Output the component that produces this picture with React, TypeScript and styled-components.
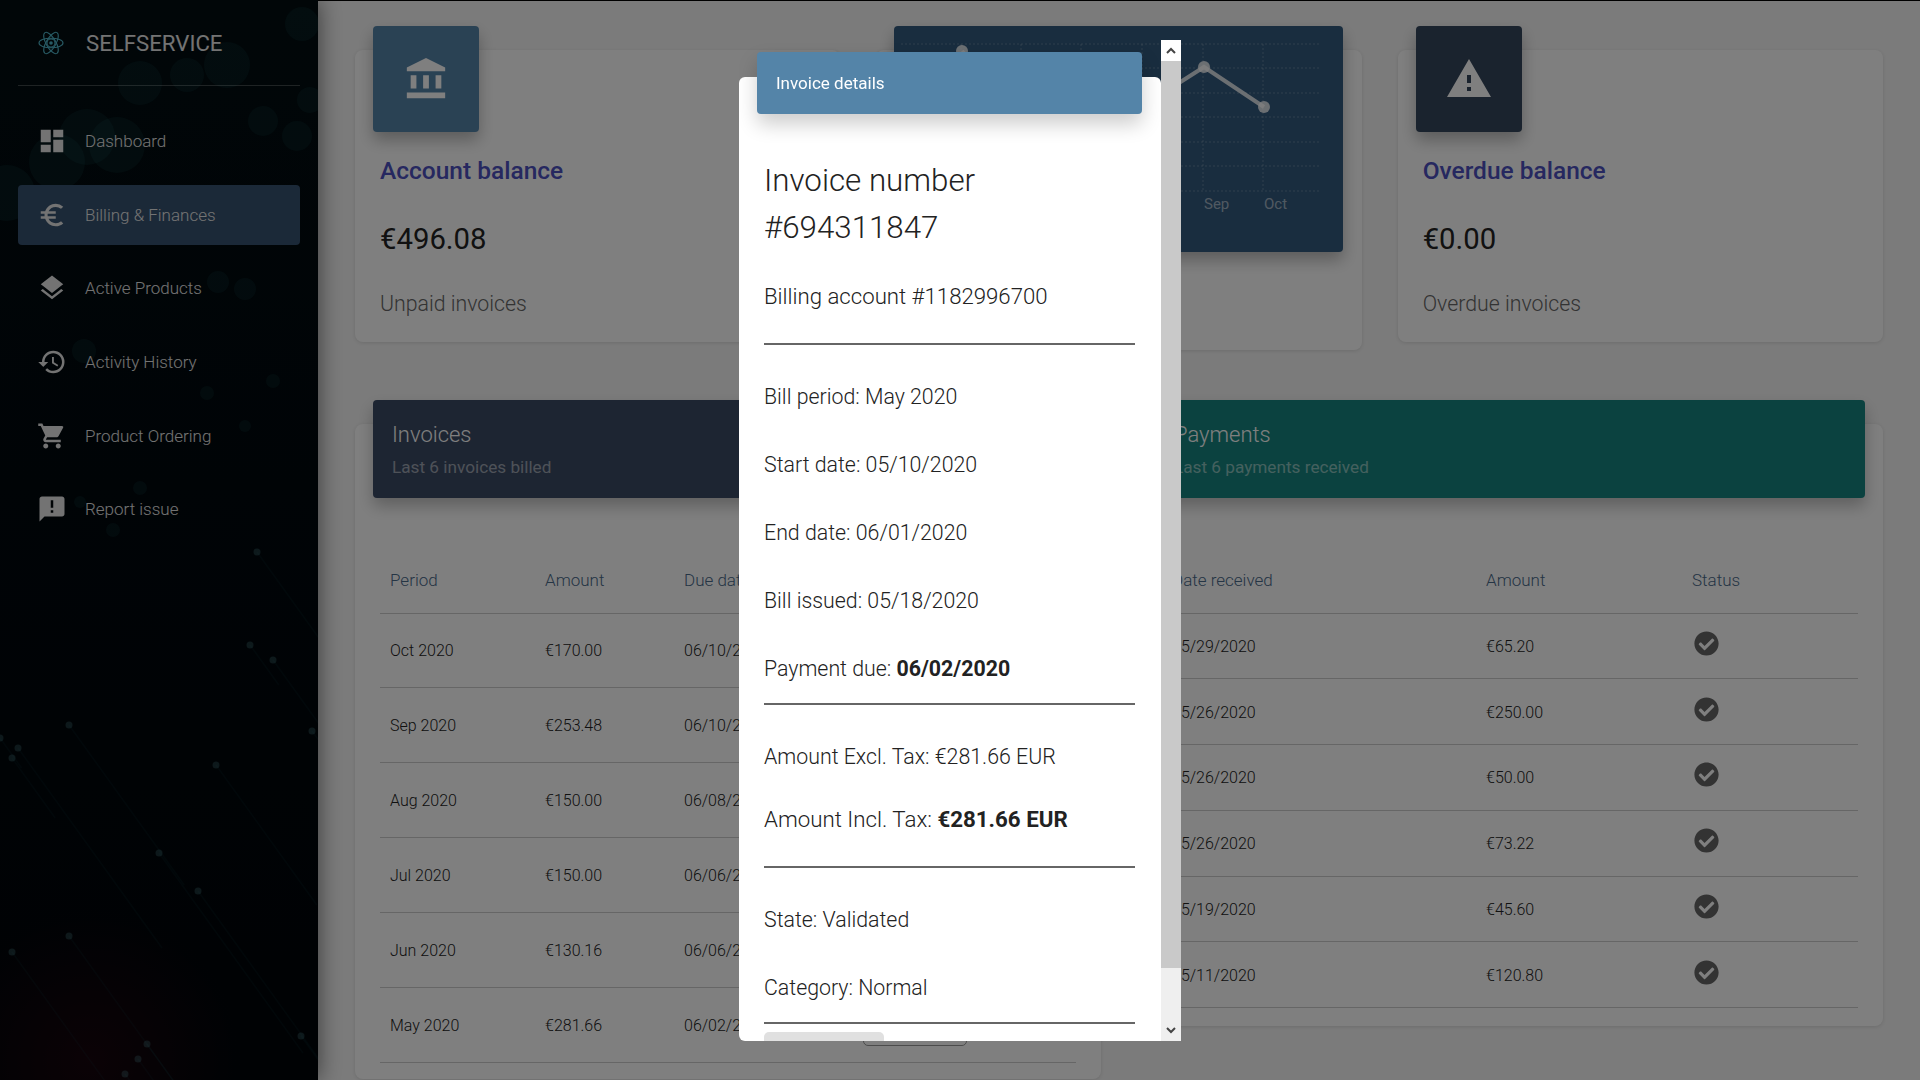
import React from 'react';
import styled, { createGlobalStyle } from 'styled-components';
import {
    MdAccountBalance,
    MdAnnouncement,
    MdDashboard,
    MdEuroSymbol,
    MdHistory,
    MdLayers,
    MdShoppingCart,
    MdWarning
} from 'react-icons/md';
import { FaCheckCircle } from 'react-icons/fa';

const GlobalStyle = createGlobalStyle`
    html, body {
        margin: 0;
        height: 100%;
        overflow: hidden;
        background: #f7f7f7;
        font-family: Roboto, "Liberation Sans", sans-serif;
        font-weight: 300;
        color: #333;
    }
    * {
        box-sizing: border-box;
    }
`;

const Page = styled.div`
    display: flex;
    width: 1920px;
    height: 1080px;
    overflow: hidden;
`;

/* Sidebar */

const Sidebar = styled.aside`
    position: relative;
    flex: 0 0 318px;
    height: 1080px;
    padding: 0 18px;
    overflow: hidden;
    background:
        radial-gradient(circle at 90px 1060px, #16040c 0, rgba(22, 4, 12, 0) 150px),
        linear-gradient(180deg, #020d11 0, #01080d 45%, #000408 100%);
    box-shadow: 0 0 22px rgba(0, 0, 0, 0.55);
    z-index: 1;
`;

const SidebarArt = styled.svg`
    position: absolute;
    top: 0;
    left: 0;
`;

const Brand = styled.div`
    position: relative;
    display: flex;
    align-items: center;
    height: 86px;
    margin-bottom: 25px;
    padding-left: 20px;
    border-bottom: 1px solid rgba(255, 255, 255, 0.24);
    font-size: 22.2px;
    font-weight: 400;
    color: #e6e6e6;
`;

const BrandName = styled.span`
    margin-left: 22px;
`;

const Nav = styled.nav`
    position: relative;
    display: flex;
    flex-direction: column;
    gap: 13.2px;
`;

const NavItem = styled.a<{ $active?: boolean }>`
    display: flex;
    align-items: center;
    height: 60.4px;
    padding-left: 20px;
    border-radius: 4px;
    background: ${p => (p.$active ? '#365270' : 'transparent')};
    color: #e6e6e6;
    font-size: 17px;
    svg {
        flex: 0 0 30px;
        margin-right: 18px;
        margin-left: -1px;
    }
`;

/* Main column */

const Main = styled.main`
    flex: 1;
    height: 1080px;
    padding: 26px 37px 0;
    border-top: 1px solid #000;
    background: #f7f7f7;
`;

const StatGrid = styled.section`
    display: grid;
    grid-template-columns: repeat(3, 1fr);
    gap: 36px;
    align-items: start;
    margin-top: -1px;
`;

const Card = styled.div`
    margin-top: 24px;
    padding: 0 18px;
    border-radius: 8px;
    background: #fff;
    box-shadow: 0 1px 4px rgba(0, 0, 0, 0.12);
`;

const StatCard = styled(Card)<{ $tail?: number }>`
    padding-bottom: ${p => p.$tail ?? 25}px;
`;

const Tile = styled.div<{ $color: string }>`
    display: flex;
    align-items: center;
    justify-content: center;
    width: 106px;
    height: 106px;
    margin-top: -24px;
    border-radius: 4px;
    background: ${p => p.$color};
    color: #fff;
    box-shadow: 0 8px 16px rgba(0, 0, 0, 0.28);
`;

const StatTitle = styled.h3`
    margin: 25px 0 0 7px;
    font-size: 24.5px;
    line-height: 28px;
    font-weight: 500;
    color: #4c50c0;
`;

const StatValue = styled.div`
    margin: 37px 0 0 7px;
    font-size: 29.3px;
    line-height: 34px;
    font-weight: 400;
    color: #222;
`;

const StatNote = styled.div`
    margin: 35px 0 0 7px;
    font-size: 21.3px;
    line-height: 26px;
    color: #666;
`;

const ChartPanel = styled.div`
    position: relative;
    height: 226px;
    margin: -24px 1px 0 0;
    border-radius: 4px;
    background: #335a7e;
    box-shadow: 0 8px 16px rgba(0, 0, 0, 0.28);
`;

const TableGrid = styled.section`
    display: grid;
    grid-template-columns: repeat(2, 1fr);
    gap: 36px;
    align-items: start;
    margin-top: 50px;
`;

const TableCard = styled(Card)<{ $tail: number }>`
    padding-bottom: ${p => p.$tail}px;
`;

const TableHeader = styled.div<{ $color: string }>`
    height: 98px;
    margin-top: -24px;
    padding: 21px 19px 0;
    border-radius: 4px;
    background: ${p => p.$color};
    box-shadow: 0 8px 16px rgba(0, 0, 0, 0.25);
`;

const TableTitle = styled.div`
    font-size: 22px;
    line-height: 28px;
    color: #fff;
`;

const TableSub = styled.div`
    margin-top: 8px;
    font-size: 17.2px;
    line-height: 20px;
    font-weight: 400;
    color: rgba(255, 255, 255, 0.5);
`;

const DataTable = styled.table<{ $rowHeight: number }>`
    width: calc(100% - 14px);
    margin: 49px 7px 0;
    border-collapse: collapse;
    table-layout: fixed;
    td {
        height: ${p => p.$rowHeight}px;
    }
`;

const HeadCell = styled.th<{ $width?: number }>`
    width: ${p => (p.$width ? `${p.$width}px` : 'auto')};
    height: 66px;
    padding: 0 0 0 10px;
    border-bottom: 1px solid #ccc;
    text-align: left;
    font-size: 17px;
    font-weight: 300;
    color: #4a6a8a;
`;

const Cell = styled.td`
    padding: 1px 0 0 10px;
    border-bottom: 1px solid #ccc;
    font-size: 16px;
    color: #222;
`;

const ViewButton = styled.button`
    width: 104px;
    height: 42px;
    border: 1px solid #999;
    border-radius: 5px;
    background: transparent;
    font: inherit;
`;

const StatusIcon = styled(FaCheckCircle)`
    display: block;
    margin: -6px 0 0 2px;
    color: #666;
`;

/* Modal */

const Backdrop = styled.div`
    position: fixed;
    inset: 0;
    z-index: 5;
    background: rgba(0, 0, 0, 0.5);
`;

const ModalFrame = styled.div`
    position: absolute;
    top: 40px;
    left: 739px;
    width: 442px;
    height: 1001px;
    overflow: hidden;
    border-bottom-left-radius: 6px;
`;

const Paper = styled.div`
    width: 422px;
    min-height: 1100px;
    margin-top: 37px;
    padding: 0 26px 0 25px;
    border-radius: 6px;
    background: #fff;
`;

const ModalHeader = styled.div`
    width: 385px;
    height: 62px;
    margin: 0 0 0 -7px;
    position: relative;
    top: -25px;
    padding-left: 19px;
    display: flex;
    align-items: center;
    border-radius: 4px;
    background: #5484a8;
    color: #fff;
    font-size: 17px;
    font-weight: 400;
    box-shadow: 0 10px 20px rgba(0, 0, 0, 0.2);
`;

const InvoiceHeading = styled.h2`
    margin: 18px 0 0;
    font-size: 31.3px;
    line-height: 47px;
    font-weight: 300;
    color: #222;
`;

const Line = styled.p<{ $top: number; $size?: number }>`
    margin: ${p => p.$top}px 0 0;
    font-size: ${p => p.$size ?? 21.33}px;
    line-height: 32px;
    color: #222;
    white-space: nowrap;
    b {
        font-weight: 700;
    }
`;

const Rule = styled.hr<{ $top: number }>`
    height: 2px;
    margin: ${p => p.$top}px 0 0;
    border: 0;
    background: #666;
`;

const CloseButton = styled.button`
    display: block;
    width: 120px;
    height: 40px;
    margin-top: 8px;
    border: 0;
    border-radius: 5px;
    background: #e0e0e0;
`;

const ScrollTrack = styled.div`
    position: absolute;
    top: 0;
    right: 0;
    display: flex;
    flex-direction: column;
    width: 20px;
    height: 1001px;
    background: #efefef;
`;

const ScrollArrow = styled.div`
    display: flex;
    align-items: center;
    justify-content: center;
    height: 21px;
    background: #fff;
`;

const ScrollArrowLow = styled(ScrollArrow)`
    margin-top: auto;
    background: transparent;
`;

const ScrollThumb = styled.div`
    height: 907px;
    background: #c9c9c9;
`;

const navItems = [
    { label: 'Dashboard', Icon: MdDashboard },
    { label: 'Billing & Finances', Icon: MdEuroSymbol, active: true },
    { label: 'Active Products', Icon: MdLayers },
    { label: 'Activity History', Icon: MdHistory },
    { label: 'Product Ordering', Icon: MdShoppingCart },
    { label: 'Report issue', Icon: MdAnnouncement }
];

const invoices = [
    ['Oct 2020', '€170.00', '06/10/2020'],
    ['Sep 2020', '€253.48', '06/10/2020'],
    ['Aug 2020', '€150.00', '06/08/2020'],
    ['Jul 2020', '€150.00', '06/06/2020'],
    ['Jun 2020', '€130.16', '06/06/2020'],
    ['May 2020', '€281.66', '06/02/2020']
];

const payments = [
    ['05/29/2020', '€65.20'],
    ['05/26/2020', '€250.00'],
    ['05/26/2020', '€50.00'],
    ['05/26/2020', '€73.22'],
    ['05/19/2020', '€45.60'],
    ['05/11/2020', '€120.80']
];

// x, y, radius of the soft bubbles at the top of the sidebar photo
const bokeh = [
    [302, 24, 17], [227, 65, 23], [140, 83, 22], [187, 75, 17], [263, 121, 15],
    [297, 136, 15], [310, 100, 13], [87, 137, 28], [117, 145, 28], [57, 162, 28],
    [7, 193, 28], [218, 282, 11], [245, 289, 11], [84, 351, 12], [207, 393, 7],
    [273, 381, 7], [245, 426, 6], [140, 488, 7], [80, 502, 6], [113, 530, 7]
];

// x, y, length of the fibre tips in the lower half
const fibres = [
    [257, 552, 120], [250, 645, 40], [273, 660, 90], [312, 731, 20], [69, 725, 160],
    [0, 738, 30], [18, 748, 200], [12, 758, 60], [216, 765, 140], [159, 853, 200],
    [198, 891, 180], [69, 936, 220], [12, 952, 240], [301, 1036, 30], [147, 1044, 60],
    [138, 1059, 50], [125, 1074, 30]
];

const SidebarBackdrop = () => (
    <SidebarArt width="318" height="1080" viewBox="0 0 318 1080">
        {bokeh.map(([x, y, r]) => (
            <circle key={`${x}-${y}`} cx={x} cy={y} r={r} fill="#2f8f8f" opacity="0.1" />
        ))}
        {fibres.map(([x, y, len]) => (
            <g key={`${x}-${y}`}>
                <line
                    x1={x}
                    y1={y}
                    x2={x + len * 0.72}
                    y2={y + len}
                    stroke="#1f6f78"
                    strokeWidth="1.5"
                    opacity="0.09"
                />
                <circle cx={x} cy={y} r="3.5" fill="#5fa0a8" opacity="0.28" />
            </g>
        ))}
    </SidebarArt>
);

const ReactMark = () => (
    <svg width="26" height="26" viewBox="0 0 26 26" fill="none" stroke="#4fb4c8" strokeWidth="1.1">
        <ellipse cx="13" cy="13" rx="12" ry="4.8" />
        <ellipse cx="13" cy="13" rx="12" ry="4.8" transform="rotate(60 13 13)" />
        <ellipse cx="13" cy="13" rx="12" ry="4.8" transform="rotate(120 13 13)" />
        <circle cx="13" cy="13" r="4" />
        <circle cx="13" cy="13" r="1.8" fill="#4fb4c8" stroke="none" />
    </svg>
);

const gridRows = [18, 42, 67, 91, 116, 140, 165];
const gridCols = [67, 127, 187, 248, 309, 369];

const chartPoints = [[68, 25], [128, 90], [188, 100], [249, 80], [310, 41], [370, 81]];

const PaymentsChart = () => (
    <svg width="448" height="226" viewBox="0 0 448 226">
        <g stroke="rgba(255,255,255,0.22)" strokeDasharray="2 2">
            {gridRows.map(y => (
                <line key={y} x1="7" y1={y} x2="427" y2={y} />
            ))}
            {gridCols.map(x => (
                <line key={x} x1={x} y1="18" x2={x} y2="165" />
            ))}
        </g>
        <polyline
            points={chartPoints.map(point => point.join(',')).join(' ')}
            fill="none"
            stroke="rgba(255,255,255,0.8)"
            strokeWidth="4"
        />
        <g fill="rgba(255,255,255,0.8)">
            {chartPoints.map(([x, y]) => (
                <circle key={x} cx={x} cy={y} r="6" />
            ))}
        </g>
        <g fill="rgba(255,255,255,0.55)" fontFamily="Roboto, sans-serif" fontSize="15" fontWeight="400">
            <text x="310" y="183">Sep</text>
            <text x="370" y="183">Oct</text>
        </g>
    </svg>
);

export default function App() {
    return (
        <Page>
            <GlobalStyle />
            <Sidebar>
                <SidebarBackdrop />
                <Brand>
                    <ReactMark />
                    <BrandName>SELFSERVICE</BrandName>
                </Brand>
                <Nav>
                    {navItems.map(({ label, Icon, active }) => (
                        <NavItem key={label} $active={active}>
                            <Icon size={30} />
                            {label}
                        </NavItem>
                    ))}
                </Nav>
            </Sidebar>

            <Main>
                <StatGrid>
                    <StatCard>
                        <Tile $color="#5584a8">
                            <MdAccountBalance size={46} />
                        </Tile>
                        <StatTitle>Account balance</StatTitle>
                        <StatValue>€496.08</StatValue>
                        <StatNote>Unpaid invoices</StatNote>
                    </StatCard>
                    <StatCard $tail={98}>
                        <ChartPanel>
                            <PaymentsChart />
                        </ChartPanel>
                    </StatCard>
                    <StatCard>
                        <Tile $color="#34465c">
                            <MdWarning size={48} />
                        </Tile>
                        <StatTitle>Overdue balance</StatTitle>
                        <StatValue>€0.00</StatValue>
                        <StatNote>Overdue invoices</StatNote>
                    </StatCard>
                </StatGrid>

                <TableGrid>
                    <TableCard $tail={16}>
                        <TableHeader $color="#3a4a64">
                            <TableTitle>Invoices</TableTitle>
                            <TableSub>Last 6 invoices billed</TableSub>
                        </TableHeader>
                        <DataTable $rowHeight={74.9}>
                            <thead>
                                <tr>
                                    <HeadCell $width={155}>Period</HeadCell>
                                    <HeadCell $width={139}>Amount</HeadCell>
                                    <HeadCell $width={179}>Due date</HeadCell>
                                    <HeadCell />
                                </tr>
                            </thead>
                            <tbody>
                                {invoices.map(([period, amount, due]) => (
                                    <tr key={period}>
                                        <Cell>{period}</Cell>
                                        <Cell>{amount}</Cell>
                                        <Cell>{due}</Cell>
                                        <Cell>
                                            <ViewButton>Details</ViewButton>
                                        </Cell>
                                    </tr>
                                ))}
                            </tbody>
                        </DataTable>
                    </TableCard>
                    <TableCard $tail={18}>
                        <TableHeader $color="#168580">
                            <TableTitle>Payments</TableTitle>
                            <TableSub>Last 6 payments received</TableSub>
                        </TableHeader>
                        <DataTable $rowHeight={65.8}>
                            <thead>
                                <tr>
                                    <HeadCell $width={314}>Date received</HeadCell>
                                    <HeadCell $width={206}>Amount</HeadCell>
                                    <HeadCell>Status</HeadCell>
                                </tr>
                            </thead>
                            <tbody>
                                {payments.map(([date, amount]) => (
                                    <tr key={date + amount}>
                                        <Cell>{date}</Cell>
                                        <Cell>{amount}</Cell>
                                        <Cell>
                                            <StatusIcon size={25} />
                                        </Cell>
                                    </tr>
                                ))}
                            </tbody>
                        </DataTable>
                    </TableCard>
                </TableGrid>
            </Main>

            <Backdrop>
                <ModalFrame>
                    <Paper>
                        <ModalHeader>Invoice details</ModalHeader>
                        <InvoiceHeading>
                            Invoice number
                            <br />
                            #694311847
                        </InvoiceHeading>
                        <Line $top={29} $size={22.2}>Billing account #1182996700</Line>
                        <Rule $top={31} />
                        <Line $top={36}>Bill period: May 2020</Line>
                        <Line $top={36}>Start date: 05/10/2020</Line>
                        <Line $top={36}>End date: 06/01/2020</Line>
                        <Line $top={36}>Bill issued: 05/18/2020</Line>
                        <Line $top={36}>Payment due: <b>06/02/2020</b></Line>
                        <Rule $top={18} />
                        <Line $top={36}>Amount Excl. Tax: €281.66 EUR</Line>
                        <Line $top={30} $size={22.3}>Amount Incl. Tax: <b>€281.66 EUR</b></Line>
                        <Rule $top={31} />
                        <Line $top={36}>State: Validated</Line>
                        <Line $top={36}>Category: Normal</Line>
                        <Rule $top={18} />
                        <CloseButton aria-label="Close" />
                    </Paper>
                    <ScrollTrack>
                        <ScrollArrow>
                            <svg width="10" height="7" viewBox="0 0 10 7" fill="none" stroke="#444" strokeWidth="2">
                                <path d="M1 6 L5 2 L9 6" />
                            </svg>
                        </ScrollArrow>
                        <ScrollThumb />
                        <ScrollArrowLow>
                            <svg width="10" height="7" viewBox="0 0 10 7" fill="none" stroke="#444" strokeWidth="2">
                                <path d="M1 1 L5 5 L9 1" />
                            </svg>
                        </ScrollArrowLow>
                    </ScrollTrack>
                </ModalFrame>
            </Backdrop>
        </Page>
    );
}
